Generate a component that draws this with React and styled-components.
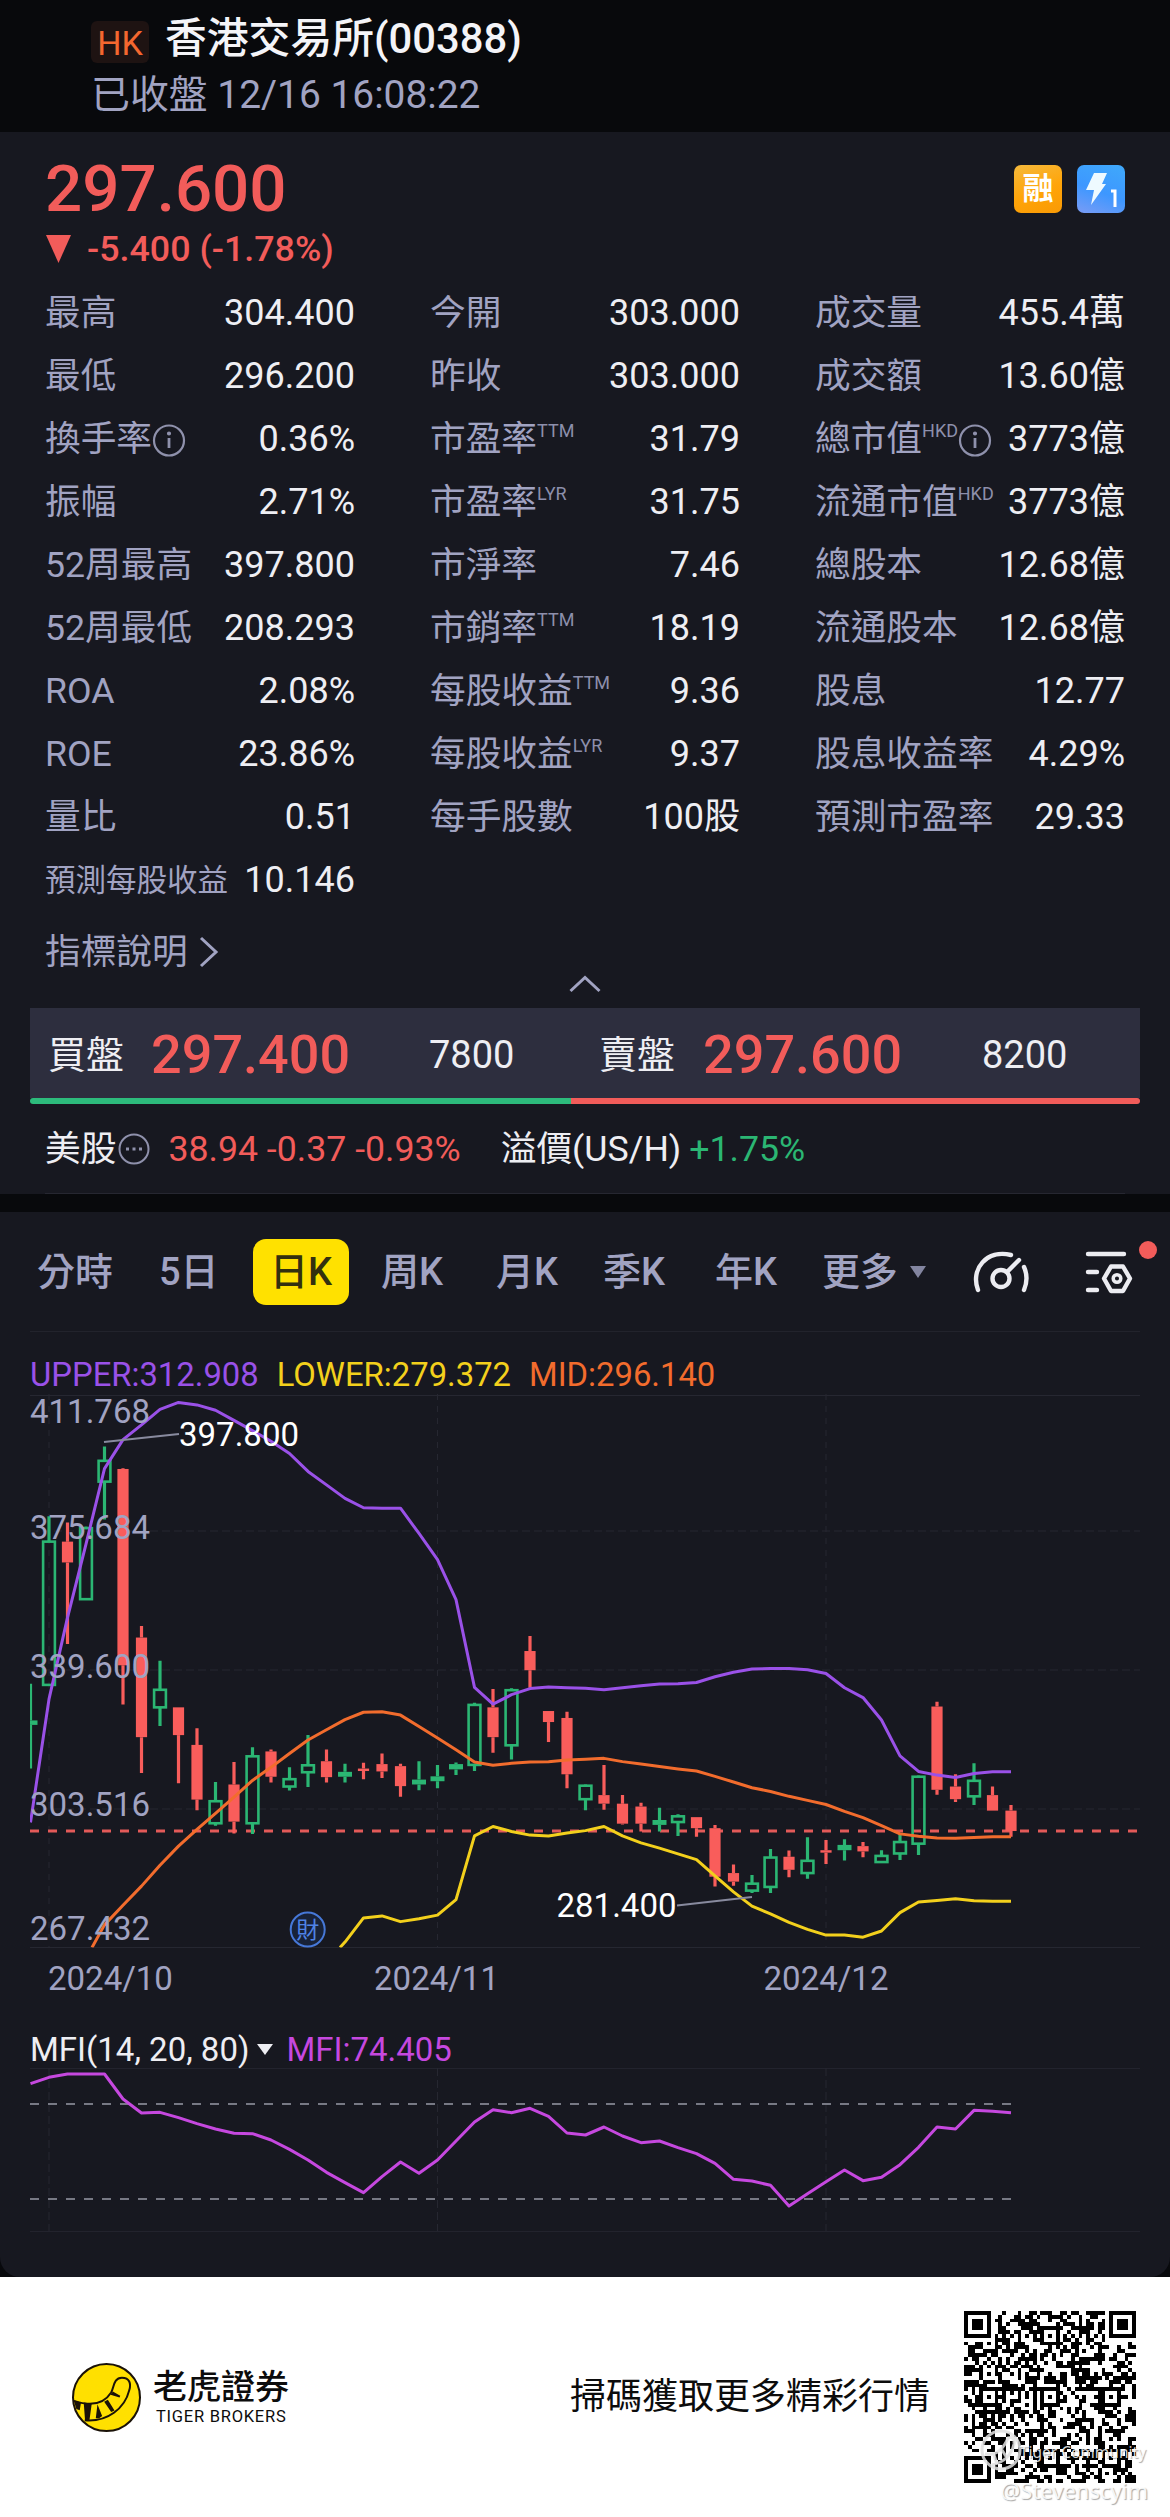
import styled, { createGlobalStyle } from 'styled-components';

const GlobalStyle = createGlobalStyle`
  * { box-sizing: border-box; }
  body {
    margin: 0;
    background: #08090c;
    font-family: Roboto, "Noto Sans CJK TC", sans-serif;
  }
  svg { display: block; overflow: visible; }
`;

const RED = '#f25c5a';
const GREEN = '#2bb673';
const LABEL = '#a1a3c2';
const TEXT = '#eeeef3';
const FONT = 'Roboto, "Noto Sans CJK TC", sans-serif';

const Page = styled.div`
  width: 1170px;
  height: 2517px;
  overflow: hidden;
  background: #08090c;
`;

const Header = styled.header`
  height: 132px;
  padding: 11px 0 0 91px;
`;

const TitleRow = styled.div`
  display: flex;
  align-items: center;
  height: 56px;
  gap: 16px;
`;

const Market = styled.span`
  width: 58px;
  height: 42px;
  margin-top: 6px;
  border-radius: 6px;
  background: #1e1312;
  color: #f4672f;
  font-size: 34px;
  line-height: 44px;
  text-align: center;
`;

const Title = styled.h1`
  margin: 0;
  color: #f4f4f8;
  font-size: 41.8px;
  font-weight: 500;
  line-height: 54px;
`;

const Status = styled.div`
  padding-top: 1px;
  color: ${LABEL};
  font-size: 38.9px;
  line-height: 54px;
`;

const Quote = styled.section`
  height: 1062px;
  padding-top: 16px;
  background: #171820;
`;

const PriceRow = styled.div`
  display: flex;
  align-items: center;
  height: 78px;
  padding: 0 45px 0 45px;
  gap: 15px;
`;

const Price = styled.div`
  flex: 1;
  padding-top: 3px;
  color: ${RED};
  font-size: 65.5px;
  font-weight: 500;
  line-height: 78px;
`;

const Badge = styled.div`
  width: 48px;
  height: 48px;
  margin-top: 4px;
  border-radius: 7px;
  background: ${props => props.$bg};
  color: white;
  font-size: 31px;
  font-weight: 700;
  line-height: 48px;
  text-align: center;
`;

const Change = styled.div`
  display: flex;
  align-items: center;
  height: 46px;
  padding-left: 46px;
  gap: 16px;
  color: ${RED};
  font-size: 35.8px;
  font-weight: 500;
`;

const Stats = styled.div`
  display: grid;
  grid-template-columns: repeat(3, 310px);
  grid-auto-rows: 63px;
  column-gap: 75px;
  padding: 10px 0 0 45px;
`;

const Stat = styled.div`
  display: flex;
  align-items: center;
  justify-content: space-between;
  line-height: 63px;
  white-space: nowrap;
`;

const StatLabel = styled.div`
  display: flex;
  align-items: center;
  color: ${LABEL};
  font-size: ${props => (props.$small ? 30.5 : 35.7)}px;
`;

const Sup = styled.span`
  padding-bottom: 18px;
  color: #8d8fab;
  font-size: 18px;
  line-height: 45px;
`;

const StatValue = styled.div`
  color: ${TEXT};
  font-size: 36px;
`;

const Explain = styled.div`
  display: flex;
  align-items: center;
  height: 46px;
  margin-top: 17px;
  padding-left: 45px;
  gap: 11px;
  color: ${LABEL};
  font-size: 35.7px;
  line-height: 46px;
`;

const Collapse = styled.div`
  display: flex;
  justify-content: center;
  height: 33px;
`;

const Book = styled.div`
  display: grid;
  grid-template-columns: 103px 278px 170px 104px 279px 1fr;
  align-items: center;
  height: 90px;
  margin: 0 30px;
  padding: 4px 0 0 18px;
  background: #2d2e3e;
  color: ${TEXT};
  font-size: 38px;
  line-height: 60px;
`;

const BookPrice = styled.span`
  color: ${RED};
  font-size: 54px;
  font-weight: 500;
`;

const BookBar = styled.div`
  display: flex;
  height: 6px;
  margin: 0 30px;
  border-radius: 3px;
  overflow: hidden;
`;

const BarPart = styled.div`
  flex: ${props => props.$share};
  background: ${props => props.$color};
`;

const UsRow = styled.div`
  display: flex;
  align-items: center;
  height: 90px;
  margin: 0 45px;
  border-bottom: 1px solid #262731;
  color: ${TEXT};
  font-size: 35.7px;
  line-height: 88px;
  white-space: pre;
`;

const Down = styled.span`
  margin: 0 40px 0 16px;
  color: ${RED};
`;

const Up = styled.span`
  margin-left: 8px;
  color: ${GREEN};
`;

const ChartCard = styled.section`
  height: 1065px;
  margin-top: 18px;
  border-radius: 0 0 20px 20px;
  background: #171820;
`;

const Tabs = styled.nav`
  display: grid;
  grid-template-columns: 122px 94px 128px 115px 107px 112px 107px 151px 113px 1fr;
  align-items: center;
  height: 120px;
  margin: 0 30px;
  padding: 1px 0 0 7px;
  border-bottom: 1px solid #22232c;
`;

const Tab = styled.div`
  display: flex;
  align-items: center;
  gap: 12px;
  color: ${LABEL};
  font-size: 38px;
  font-weight: 500;
  line-height: 66px;
`;

const ActiveTab = styled(Tab)`
  justify-content: center;
  width: 96px;
  border-radius: 13px;
  background: #ffe100;
  color: #33300f;
`;

const SettingsIcon = styled.div`
  position: relative;
  width: 47px;
  height: 44px;
`;

const Dot = styled.span`
  position: absolute;
  top: -9px;
  left: 53px;
  width: 18px;
  height: 18px;
  border-radius: 50%;
  background: ${RED};
`;

const Legend = styled.div`
  display: flex;
  align-items: center;
  height: 62px;
  padding: 24px 0 0 30px;
  gap: 18px;
  font-size: 32.8px;
`;

const Colored = styled.span`
  color: ${props => props.$color};
`;

const MfiHead = styled.div`
  display: flex;
  align-items: center;
  height: 58px;
  padding: 20px 0 0 30px;
  color: ${TEXT};
  font-size: 33px;
`;

const MfiValue = styled.span`
  margin-left: 13px;
  color: #c648df;
`;

const MfiArrow = styled.span`
  margin-left: 8px;
  border: 8px solid transparent;
  border-top: 11px solid ${TEXT};
  border-bottom: 0;
`;

const Footer = styled.footer`
  position: relative;
  display: flex;
  align-items: center;
  height: 240px;
  padding: 0 34px 0 72px;
  background: white;
  color: #0c0c0c;
`;

const Brand = styled.div`
  flex: 1;
  margin-left: 12px;
  font-size: 34px;
  font-weight: 500;
  line-height: 40px;
`;

const BrandEn = styled.div`
  padding-left: 3px;
  font-size: 16.5px;
  font-weight: 400;
  letter-spacing: 0.75px;
  line-height: 20px;
`;

const Slogan = styled.div`
  margin-right: 34px;
  font-size: 36px;
  line-height: 42px;
`;

const Watermark = styled.div`
  position: absolute;
  top: ${props => props.$top}px;
  right: ${props => props.$right}px;
  color: rgba(255, 255, 255, 0.85);
  font-family: "Noto Sans", sans-serif;
  font-size: ${props => props.$size}px;
  line-height: 28px;
  text-shadow: 1px 1px 1px rgba(0, 0, 0, 0.35);
`;

const WatermarkLogo = styled.svg`
  position: absolute;
  left: 980px;
  top: 152px;
`;

// label, value, superscript, info icon
const stats = [
  ['最高', '304.400'], ['今開', '303.000'], ['成交量', '455.4萬'],
  ['最低', '296.200'], ['昨收', '303.000'], ['成交額', '13.60億'],
  ['換手率', '0.36%', '', true], ['市盈率', '31.79', 'TTM'], ['總市值', '3773億', 'HKD', true],
  ['振幅', '2.71%'], ['市盈率', '31.75', 'LYR'], ['流通市值', '3773億', 'HKD'],
  ['52周最高', '397.800'], ['市淨率', '7.46'], ['總股本', '12.68億'],
  ['52周最低', '208.293'], ['市銷率', '18.19', 'TTM'], ['流通股本', '12.68億'],
  ['ROA', '2.08%'], ['每股收益', '9.36', 'TTM'], ['股息', '12.77'],
  ['ROE', '23.86%'], ['每股收益', '9.37', 'LYR'], ['股息收益率', '4.29%'],
  ['量比', '0.51'], ['每手股數', '100股'], ['預測市盈率', '29.33'],
  ['預測每股收益', '10.146'],
];

// up(1)/down(0), high, body top, body bottom, low
const candles = [
  [1, 842, 932, 943, 1050], [1, 432, 494, 845, 845], [0, 447, 494, 545, 745],
  [1, 457, 461, 635, 635], [1, 261, 296, 347, 440], [0, 314, 316, 797, 893],
  [0, 701, 729, 973, 1061], [1, 786, 857, 900, 946], [0, 900, 900, 968, 1086],
  [0, 951, 992, 1126, 1152], [1, 1083, 1130, 1184, 1190], [0, 1034, 1089, 1180, 1209],
  [1, 998, 1020, 1184, 1210], [0, 1003, 1008, 1070, 1084], [1, 1047, 1076, 1094, 1104],
  [1, 968, 1042, 1059, 1095], [0, 1003, 1032, 1071, 1084], [1, 1038, 1058, 1070, 1084],
  [0, 1036, 1050, 1056, 1076], [0, 1013, 1039, 1057, 1073], [0, 1038, 1044, 1093, 1119],
  [1, 1032, 1077, 1089, 1103], [1, 1041, 1069, 1081, 1098], [1, 1035, 1039, 1052, 1066],
  [1, 889, 894, 1041, 1056], [0, 855, 900, 973, 1011], [1, 853, 858, 993, 1028],
  [0, 725, 762, 809, 852], [0, 909, 909, 936, 985], [0, 911, 926, 1064, 1098],
  [1, 1089, 1092, 1125, 1152], [0, 1041, 1115, 1136, 1151], [0, 1115, 1136, 1185, 1187],
  [0, 1134, 1143, 1185, 1204], [1, 1146, 1176, 1188, 1204], [1, 1162, 1167, 1181, 1215],
  [0, 1169, 1169, 1196, 1217], [0, 1188, 1196, 1315, 1339], [0, 1285, 1306, 1327, 1337],
  [1, 1311, 1332, 1349, 1355], [1, 1247, 1268, 1340, 1355], [0, 1251, 1266, 1298, 1316],
  [1, 1218, 1276, 1306, 1320], [0, 1225, 1250, 1256, 1284], [1, 1223, 1237, 1250, 1275],
  [0, 1230, 1240, 1253, 1267], [1, 1250, 1264, 1279, 1280], [1, 1208, 1230, 1258, 1274],
  [1, 1067, 1070, 1234, 1262], [0, 886, 898, 1102, 1114], [0, 1064, 1094, 1125, 1132],
  [1, 1037, 1080, 1118, 1139], [0, 1094, 1115, 1153, 1153], [0, 1139, 1153, 1203, 1217],
];

const upper = [
  1182, 880, 680, 500, 315, 244, 208, 170, 153, 159, 172, 197, 222, 248, 278, 322, 355, 388,
  411, 412, 412, 474, 538, 636, 851, 892, 869, 854, 850, 852, 853, 857, 852, 847, 843, 842,
  839, 825, 814, 806, 805, 805, 808, 817, 852, 876, 931, 1019, 1057, 1066, 1072, 1062, 1058, 1058,
];
const mid = [
  1433, 1385, 1338, 1287, 1240, 1199, 1160, 1120, 1079, 1047, 1013, 980, 955, 930, 912, 911,
  919, 947, 975, 1004, 1034, 1042, 1037, 1034, 1033, 1029, 1027, 1025, 1033, 1039, 1045, 1051,
  1056, 1069, 1083, 1097, 1106, 1118, 1128, 1138, 1155, 1170, 1190, 1210, 1216, 1220, 1221,
  1219, 1217, 1217,
];
const lower = [
  1475, 1416, 1411, 1425, 1418, 1409, 1371, 1215, 1192, 1204, 1213, 1215, 1208, 1202, 1192,
  1215, 1232, 1245, 1259, 1273, 1313, 1352, 1387, 1406, 1427, 1444, 1458, 1458, 1463, 1448,
  1403, 1377, 1373, 1369, 1374, 1375, 1375,
];
const mfi = [
  371, 352, 342, 342, 342, 417, 459, 457, 473, 491, 507, 520, 521, 540, 568, 600, 637, 668,
  698, 650, 606, 640, 600, 543, 486, 449, 458, 445, 469, 519, 525, 501, 528, 548, 543, 563,
  581, 610, 658, 663, 676, 738, 701, 665, 630, 662, 652, 614, 562, 501, 507, 451, 454, 458,
];

const xAt = i => 30.5 + i * 18.5;
const yAt = v => (v - 132.3) / 2.45;
const mfiY = v => (v - 324) / 3;
const line = (values, from, y) => values.map((v, i) => `${xAt(i + from)},${y(v)}`).join(' ');

const InfoIcon = () => (
  <svg width="34" height="34" viewBox="0 0 34 34" fill="none" stroke="#8f91ac" strokeWidth="2.2">
    <circle cx="17" cy="17.5" r="15" />
    <path d="M17 15v10" strokeWidth="2.8" />
    <circle cx="17" cy="10.5" r="1" fill="#8f91ac" />
  </svg>
);

const Candle = ({ i, data }) => {
  const [up, high, top, bottom, low] = data;
  const x = xAt(i);
  const y1 = yAt(top);
  const y2 = yAt(bottom);
  const color = up ? GREEN : '#f95d5b';
  const hollow = up && y2 - y1 > 5.4;
  return (
    <g stroke={color} fill={color}>
      <path d={`M${x} ${yAt(high)}V${y1}M${x} ${y2}V${yAt(low)}`} strokeWidth="3.2" />
      {hollow ? (
        <rect x={x - 5.9} y={y1} width="11.8" height={y2 - y1} fill="none" strokeWidth="2.6" />
      ) : (
        <rect x={x - (up ? 7 : 5.6)} y={y1} width={up ? 14 : 11.2} height={y2 - y1} stroke="none" />
      )}
    </g>
  );
};

const CandleChart = () => (
  <svg width="1170" height="616" fontFamily={FONT} fontSize="33">
    <clipPath id="plot"><rect x="30" y="0" width="1110" height="553.5" /></clipPath>
    <g stroke="#262731" fill="none">
      <path d="M30 1.5H1140M30 553.5H1140" />
      <path d="M30 137H1140M30 276H1140M30 415H1140" strokeDasharray="8 4" />
      <path d="M49 0V553M437.5 0V553M826 0V553" strokeDasharray="6 6" />
    </g>
    <g clipPath="url(#plot)">
      <path d="M30 437H1140" stroke="#e35a59" strokeWidth="3" strokeDasharray="9 9" />
      {candles.map((c, i) => <Candle key={i} i={i} data={c} />)}
      <g fill="none" strokeWidth="3" strokeLinejoin="round">
        <polyline points={line(upper, 0, yAt)} stroke="#9a51e8" />
        <polyline points={`92,553.5 ${line(mid, 4, yAt)}`} stroke="#f26c2d" />
        <polyline points={`340,553.5 ${line(lower, 17, yAt)}`} stroke="#f3d01c" />
      </g>
    </g>
    <path d="M104 48L179 40M677 511.5L752 503" stroke="#888a9e" strokeWidth="2.2" />
    <g fill={LABEL}>
      <text x="30" y="29">411.768</text>
      <text x="30" y="145">375.684</text>
      <text x="30" y="284">339.600</text>
      <text x="30" y="422">303.516</text>
      <text x="30" y="546">267.432</text>
      <text x="48" y="596">2024/10</text>
      <text x="436.5" y="596" textAnchor="middle">2024/11</text>
      <text x="826" y="596" textAnchor="middle">2024/12</text>
    </g>
    <g fill="#fff">
      <text x="179" y="52">397.800</text>
      <text x="556.5" y="523">281.400</text>
    </g>
    <circle cx="307.7" cy="535.5" r="17" fill="#182238" stroke="#4678d8" strokeWidth="2" />
    <text x="307.7" y="544" fontSize="23" fill="#4f83e6" textAnchor="middle">財</text>
  </svg>
);

const MfiChart = () => (
  <svg width="1170" height="200" fill="none">
    <g stroke="#262731">
      <path d="M30 .5H1140M30 163.5H1140" strokeOpacity="0.8" />
      <path d="M49 0V163M437.5 0V163M826 0V163" strokeDasharray="8 4" />
    </g>
    <path d="M30 36H1011M30 131H1011" stroke="#777984" strokeWidth="2" strokeDasharray="9 9" />
    <polyline points={line(mfi, 0, mfiY)} stroke="#c648df" strokeWidth="3" strokeLinejoin="round" />
  </svg>
);

const SIZE = 45;

const finder = (r, c) => {
  const d = Math.max(Math.abs(r - 3), Math.abs(c - 3));
  return d === 3 || d <= 1;
};

// finder, timing and alignment patterns are fixed, the rest comes from a small generator
const buildCode = () => {
  let seed = 388;
  let path = '';
  for (let r = 0; r < SIZE; r++) {
    for (let c = 0; c < SIZE; c++) {
      seed = (seed * 1103515245 + 12345) % 2147483648;
      let on = (seed >> 16) % 100 < 51;
      const fr = r > 36 ? r - 38 : r;
      const fc = c > 36 ? c - 38 : c;
      if (fr < 8 && fc < 8 && !(r > 36 && c > 36)) {
        on = fr >= 0 && fc >= 0 && fr < 7 && fc < 7 && finder(fr, fc);
      } else if (r === 6 || c === 6) {
        on = (r + c) % 2 === 0;
      }
      [[22, 22], [22, 38], [38, 22], [38, 38], [6, 22], [22, 6]].forEach(([ar, ac]) => {
        const d = Math.max(Math.abs(r - ar), Math.abs(c - ac));
        if (d <= 2) on = d !== 1;
      });
      if (on) path += `M${c} ${r}h1v1h-1z`;
    }
  }
  return path;
};

const QrCode = () => (
  <svg width="172" height="172" viewBox={`0 0 ${SIZE} ${SIZE}`} shapeRendering="crispEdges">
    <path d={buildCode()} fill="#000" />
  </svg>
);

const TigerLogo = () => (
  <svg width="69" height="69" viewBox="66 68 206 206">
    <circle cx="169" cy="171" r="100" fill="#ffe000" stroke="#1a1208" strokeWidth="6" />
    <path
      d="M72 181C120 197 160 192 183 156C192 140 190 112 215 112C238 112 243 130 237 149C224 203 172 245 104 239"
      fill="none" stroke="#1a1208" strokeWidth="6"
    />
    <path
      d="M71 179L93 186L89 209L79 205ZM101 186L125 189L118 240L105 240ZM142 191L156 226L147 233L137 233ZM162 184L173 178L193 210L183 214ZM181 163L188 153L210 166L208 171Z"
      fill="#1a1208"
    />
  </svg>
);

export default function App() {
  return (
    <Page>
      <GlobalStyle />
      <Header>
        <TitleRow>
          <Market>HK</Market>
          <Title>香港交易所(00388)</Title>
        </TitleRow>
        <Status>已收盤 12/16 16:08:22</Status>
      </Header>

      <Quote>
        <PriceRow>
          <Price>297.600</Price>
          <Badge $bg="linear-gradient(160deg, #f5b93c, #ffa408 55%, #f99a05)">融</Badge>
          <Badge $bg="linear-gradient(20deg, #7a9cf5, #3d97ff 45%, #3fa9fb)">
            <svg width="48" height="48" viewBox="0 0 48 48">
              <path d="M17 8H30L25 19H29L14 40L17 25H9Z" fill="#eefaff" />
              <path d="M34 26H38V42" fill="none" stroke="#fff" strokeWidth="3" />
            </svg>
          </Badge>
        </PriceRow>
        <Change>
          <svg width="25" height="28" viewBox="0 0 25 28"><path d="M0 0H25L12.5 28Z" fill={RED} /></svg>
          -5.400 (-1.78%)
        </Change>
        <Stats>
          {stats.map(([label, value, sup, info], i) => (
            <Stat key={i}>
              <StatLabel $small={label.length > 5}>
                {label}
                {sup && <Sup>{sup}</Sup>}
                {info && <InfoIcon />}
              </StatLabel>
              <StatValue>{value}</StatValue>
            </Stat>
          ))}
        </Stats>
        <Explain>
          指標說明
          <svg width="20" height="32" viewBox="0 0 20 32" fill="none" stroke={LABEL} strokeWidth="3">
            <path d="M2 2L17 16L2 30" />
          </svg>
        </Explain>
        <Collapse>
          <svg width="32" height="18" viewBox="0 0 32 18" fill="none" stroke={LABEL} strokeWidth="3">
            <path d="M1.5 16L16 2.5L30.5 16" />
          </svg>
        </Collapse>
        <Book>
          <span>買盤</span>
          <BookPrice>297.400</BookPrice>
          <span>7800</span>
          <span>賣盤</span>
          <BookPrice>297.600</BookPrice>
          <span>8200</span>
        </Book>
        <BookBar>
          <BarPart $share={541} $color="#2dbb7c" />
          <BarPart $share={569} $color={RED} />
        </BookBar>
        <UsRow>
          美股
          <svg width="36" height="36" viewBox="0 0 36 36">
            <circle cx="18" cy="18" r="14.5" fill="none" stroke="#8f91ac" strokeWidth="2" />
            <path d="M10 18h3M16.5 18h3M23 18h3" stroke="#8f91ac" strokeWidth="3" />
          </svg>
          <Down>38.94 -0.37 -0.93%</Down>
          溢價(US/H)
          <Up>+1.75%</Up>
        </UsRow>
      </Quote>

      <ChartCard>
        <Tabs>
          <Tab>分時</Tab>
          <Tab>5日</Tab>
          <ActiveTab>日K</ActiveTab>
          <Tab>周K</Tab>
          <Tab>月K</Tab>
          <Tab>季K</Tab>
          <Tab>年K</Tab>
          <Tab>
            更多
            <svg width="16" height="12" viewBox="0 0 16 12"><path d="M0 0H16L8 12Z" fill="#8385a0" /></svg>
          </Tab>
          <svg width="58" height="44" viewBox="0 0 58 44" fill="none" stroke="#ececf1" strokeWidth="4.4" strokeLinecap="round">
            <path d="M5 40C-3 19 14 -1 38 5" />
            <circle cx="28" cy="28.5" r="8.5" />
            <path d="M34 22L46 10M51 17Q56 28 51 40" />
          </svg>
          <SettingsIcon>
            <svg width="47" height="44" viewBox="0 0 47 44" fill="none" stroke="#ececf1" strokeWidth="4.4" strokeLinecap="round">
              <path d="M2 4H38M2 22H11M2 40H11" />
              <path d="M25 16.5H37L44 28.5L37 41H25L18 28.5Z" strokeLinejoin="round" />
              <circle cx="31" cy="28.5" r="3.8" strokeWidth="3.5" />
            </svg>
            <Dot />
          </SettingsIcon>
        </Tabs>
        <Legend>
          <Colored $color="#9a51e8">UPPER:312.908</Colored>
          <Colored $color="#f3d01c">LOWER:279.372</Colored>
          <Colored $color="#f26c2d">MID:296.140</Colored>
        </Legend>
        <CandleChart />
        <MfiHead>
          MFI(14, 20, 80)
          <MfiArrow />
          <MfiValue>MFI:74.405</MfiValue>
        </MfiHead>
        <MfiChart />
      </ChartCard>

      <Footer>
        <TigerLogo />
        <Brand>
          老虎證券
          <BrandEn>TIGER BROKERS</BrandEn>
        </Brand>
        <Slogan>掃碼獲取更多精彩行情</Slogan>
        <QrCode />
        <WatermarkLogo width="42" height="42" viewBox="0 0 42 42" fill="none" stroke="rgba(225,225,225,0.85)" strokeWidth="3">
          <circle cx="21" cy="21" r="19" />
          <path d="M5 25Q20 28 28 9Q35 7 34 15Q30 32 12 36M14 26L17 35M22 21L27 29" />
        </WatermarkLogo>
        <Watermark $top={161} $right={24} $size={15.5}>Tiger Community</Watermark>
        <Watermark $top={199} $right={22} $size={22}>@Stevenscyim</Watermark>
      </Footer>
    </Page>
  );
}
